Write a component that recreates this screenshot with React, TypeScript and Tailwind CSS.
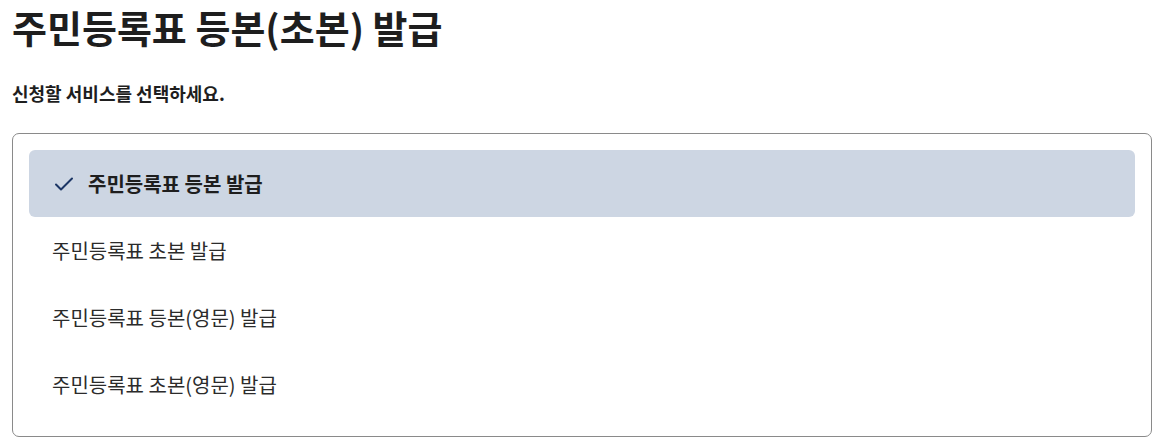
import { useState } from "react";

const options = [
  "주민등록표 등본 발급",
  "주민등록표 초본 발급",
  "주민등록표 등본(영문) 발급",
  "주민등록표 초본(영문) 발급",
];

export default function App() {
  const [selected, setSelected] = useState(0);

  return (
    <main
      className="min-h-screen bg-white pl-3 pr-[11px] text-[#1e1e1e]"
      style={{ fontFamily: "'Noto Sans CJK KR', 'Noto Sans', sans-serif" }}
    >
      <h1 className="text-[38px] font-bold leading-[54px]">주민등록표 등본(초본) 발급</h1>
      <p className="mt-[26px] text-[18px] font-bold leading-[26px]">신청할 서비스를 선택하세요.</p>

      <ul className="mt-[27px] rounded-[7px] border border-[#8a8a8a] px-4 pt-4 pb-[18px]">
        {options.map((label, i) => {
          const active = i === selected;
          return (
            <li key={label}>
              <button
                onClick={() => setSelected(i)}
                className={
                  active
                    ? "flex h-[67px] w-full items-center gap-[14px] rounded-[6px] bg-[#cdd6e3] pl-[25px] text-left text-[20px] font-bold text-[#1e1e1e]"
                    : "flex h-[67px] w-full items-center rounded-[6px] pl-[23px] text-left text-[20px] text-[#2b2b2b]"
                }
              >
                {active && (
                  <svg width="20" height="20" viewBox="0 0 20 20" fill="none">
                    <path
                      d="M2 10.5l5 5 11-11"
                      stroke="#1c3665"
                      strokeWidth="2"
                      strokeLinecap="round"
                      strokeLinejoin="round"
                    />
                  </svg>
                )}
                {label}
              </button>
            </li>
          );
        })}
      </ul>
    </main>
  );
}
